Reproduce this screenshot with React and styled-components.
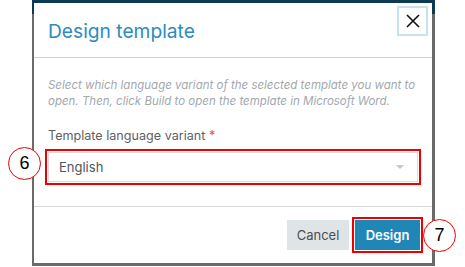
import React from 'react';
import styled, { createGlobalStyle } from 'styled-components';

const GlobalStyle = createGlobalStyle`
  html, body {
    margin: 0;
    padding: 0;
    background: #ffffff;
  }
  body {
    font-family: Inter, "Noto Sans", sans-serif;
  }
`;

const App = () => {
  return (
    <Canvas>
      <GlobalStyle />
      <Backdrop>
        <Dialog>
          <Header>
            <Title>Design template</Title>
            <CloseButton aria-label="Close">
              <svg width="14" height="14" viewBox="0 0 14 14">
                <path d="M1 1 L13 13 M13 1 L1 13" stroke="#111" strokeWidth="1.6" fill="none" />
              </svg>
            </CloseButton>
          </Header>
          <Body>
            <Hint>
              Select which language variant of the selected template you want to
              <br />
              open. Then, click Build to open the template in Microsoft Word.
            </Hint>
            <Label>
              Template language variant <Required>*</Required>
            </Label>
            <Marked>
              <Select>
                <span>English</span>
                <Caret />
              </Select>
            </Marked>
          </Body>
          <Footer>
            <Button width={62}>Cancel</Button>
            <Marked>
              <Button primary width={65}>Design</Button>
            </Marked>
          </Footer>
        </Dialog>
      </Backdrop>
      <Callout left={8} top={147}>6</Callout>
      <Callout left={423} top={219}>7</Callout>
    </Canvas>
  );
};

const Canvas = styled.div`
  position: relative;
  width: 465px;
  height: 267px;
  padding-left: 32px;
  box-sizing: border-box;
  overflow: hidden;
`;

const Backdrop = styled.div`
  width: 403px;
  height: 266px;
  box-sizing: border-box;
  padding: 3px 3px 3px 2px;
  background: linear-gradient(#0c3a52 0, #0c3a52 14px, #6a6a6a 14px, #6a6a6a 100%);
`;

const Dialog = styled.div`
  width: 398px;
  height: 260px;
  background: #ffffff;
  display: flex;
  flex-direction: column;
`;

const Header = styled.div`
  height: 54px;
  display: flex;
  justify-content: space-between;
  align-items: flex-start;
  padding: 0 4px 0 14px;
  border-bottom: 1px solid #cfd2d4;
`;

const Title = styled.h2`
  margin: 17px 0 0;
  font-family: Inter, "Noto Sans", sans-serif;
  font-weight: 400;
  font-size: 19.2px;
  line-height: 22px;
  color: #2b8cc0;
`;

const CloseButton = styled.div`
  margin-top: 3px;
  width: 31px;
  height: 30px;
  box-sizing: border-box;
  border: 2px solid #c6e2ee;
  display: flex;
  align-items: center;
  justify-content: center;
`;

const Body = styled.div`
  flex: 1;
  padding: 19px 14px 0 14px;
  border-bottom: 1px solid #d6d9db;
`;

const Hint = styled.p`
  margin: 0;
  font-family: Inter, "Noto Sans", sans-serif;
  font-style: italic;
  font-size: 11.5px;
  line-height: 16px;
  color: #a3a8ad;
  white-space: nowrap;
`;

const Label = styled.div`
  margin-top: 19px;
  margin-bottom: 8px;
  font-family: Inter, "Noto Sans", sans-serif;
  font-size: 12.6px;
  line-height: 16px;
  color: #5c6166;
`;

const Required = styled.span`
  color: #e2562d;
`;

const Marked = styled.div`
  outline: 2px solid #ee0000;
  outline-offset: 1px;
`;

const Select = styled.div`
  height: 30px;
  box-sizing: border-box;
  border: 1px solid #d8dcde;
  display: flex;
  align-items: center;
  justify-content: space-between;
  padding: 0 13px 0 10px;
  font-family: Inter, "Noto Sans", sans-serif;
  font-size: 13px;
  color: #50565b;
`;

const Caret = styled.span`
  width: 0;
  height: 0;
  border-left: 4px solid transparent;
  border-right: 4px solid transparent;
  border-top: 4px solid #c3c7ca;
`;

const Footer = styled.div`
  height: 56px;
  display: flex;
  justify-content: flex-end;
  align-items: center;
  gap: 6px;
  padding-right: 12px;
`;

const Button = styled.div`
  width: ${(p) => p.width}px;
  height: 30px;
  display: flex;
  align-items: center;
  justify-content: center;
  font-family: Inter, "Noto Sans", sans-serif;
  font-size: 13px;
  font-weight: ${(p) => (p.primary ? 600 : 400)};
  color: ${(p) => (p.primary ? '#ffffff' : '#4a4f54')};
  background: ${(p) => (p.primary ? '#1f86b6' : '#dfe5e7')};
`;

const Callout = styled.div`
  position: absolute;
  left: ${(p) => p.left}px;
  top: ${(p) => p.top}px;
  width: 33px;
  height: 33px;
  box-sizing: border-box;
  border: 1.6px solid #ee0000;
  border-radius: 50%;
  background: #ffffff;
  display: flex;
  align-items: center;
  justify-content: center;
  font-family: "Liberation Sans", Arial, sans-serif;
  font-size: 18px;
  color: #000000;
`;

export default App;
